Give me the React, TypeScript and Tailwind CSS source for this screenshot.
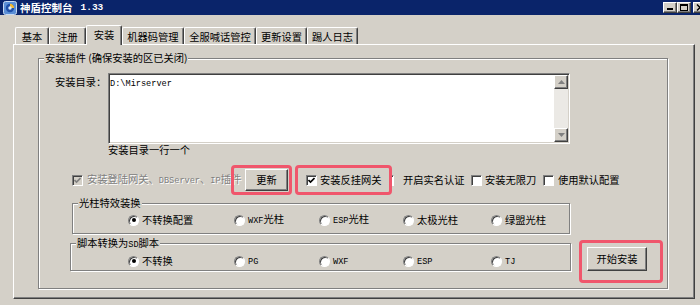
import React from "react";

/** Latin runs use a mono serif face, like the old SimSun ASCII glyphs */
function M({ children }: { children: React.ReactNode }) {
  return <span className="font-['Liberation_Mono',monospace] text-[8.6px]">{children}</span>;
}

function CheckBox({ checked = false, disabled = false }: { checked?: boolean; disabled?: boolean }) {
  return (
    <span
      className={`flex h-[11px] w-[11px] shrink-0 items-center justify-center border border-t-[#808080] border-l-[#808080] border-r-white border-b-white shadow-[inset_1px_1px_0_#404040] ${
        disabled ? "bg-[#d4d0c8]" : "bg-white"
      }`}
    >
      {checked && (
        <svg width="7" height="7" viewBox="0 0 7 7">
          <path d="M0.5 3 L2.5 5 L6.5 1" fill="none" stroke={disabled ? "#808080" : "#000"} strokeWidth="1.6" />
        </svg>
      )}
    </span>
  );
}

function Radio({ checked = false }: { checked?: boolean }) {
  return (
    <span className="flex h-[11px] w-[11px] shrink-0 items-center justify-center rounded-full border border-t-[#808080] border-l-[#808080] border-r-white border-b-white bg-white shadow-[inset_1px_1px_0_#404040]">
      {checked && <span className="h-[4px] w-[4px] rounded-full bg-black" />}
    </span>
  );
}

function RadioItem({ label, checked, className = "" }: { label: React.ReactNode; checked?: boolean; className?: string }) {
  return (
    <div className={`flex items-center gap-[3px] ${className}`}>
      <Radio checked={checked} />
      <span>{label}</span>
    </div>
  );
}

const raised =
  "border border-t-white border-l-white border-r-[#404040] border-b-[#404040] shadow-[inset_-1px_-1px_0_#808080] bg-[#d4d0c8]";
const etched = "border border-[#808080] shadow-[inset_1px_1px_0_#fff,1px_1px_0_#fff]";

function AppIcon() {
  return (
    <svg width="14" height="14" viewBox="0 0 14 14">
      <rect x="0.5" y="0.5" width="13" height="13" rx="2" fill="#5b8fd6" stroke="#c8daf2" />
      <circle cx="7" cy="7" r="4.2" fill="#1f4fa8" />
      <path d="M7 2.8 A4.2 4.2 0 0 1 11.2 7 L7 7Z" fill="#f3b830" />
      <circle cx="7" cy="7" r="1.7" fill="#d9ecff" />
    </svg>
  );
}

function Tab({ label, className, active = false }: { label: string; className: string; active?: boolean }) {
  if (active)
    return (
      <div
        className={`relative z-10 -mb-[1px] flex h-[20px] justify-center rounded-t-[2px] border-t border-l border-r border-t-white border-l-white border-r-[#404040] bg-[#d4d0c8] pt-[3px] shadow-[inset_-1px_0_0_#808080] ${className}`}
      >
        {label}
      </div>
    );
  return (
    <div
      className={`flex h-[17px] justify-center rounded-t-[2px] border-t border-l border-r border-t-white border-l-white border-r-[#404040] pt-[3px] shadow-[inset_-1px_0_0_#808080] ${className}`}
    >
      {label}
    </div>
  );
}

function GroupLabel({ children }: { children: React.ReactNode }) {
  return <span className="absolute left-[5px] top-[-7px] bg-[#d4d0c8] px-[1px] leading-[12px]">{children}</span>;
}

export default function App() {
  return (
    <div className="relative h-[305px] w-[700px] overflow-hidden bg-[#d4d0c8] font-['Noto_Sans_CJK_SC',sans-serif] text-[10.25px] leading-[12px] text-black">
      {/* Title bar */}
      <div className="flex h-[15px] items-center bg-[#0a246a] pl-[3px]">
        <AppIcon />
        <span className="ml-[3px] text-[10.5px] font-bold text-white">神盾控制台</span>
        <span className="ml-[8px] font-['Liberation_Mono',monospace] text-[9.5px] font-bold text-white">1.33</span>
        <div className="ml-auto mr-[-7px] flex">
          <div className={`flex h-[11px] w-[14px] items-end justify-center pb-[2px] ${raised}`}>
            <span className="h-[2px] w-[6px] bg-black" />
          </div>
          <div className={`flex h-[11px] w-[14px] items-center justify-center ${raised}`}>
            <span className="h-[7px] w-[8px] border border-t-2 border-black" />
          </div>
          <div className={`ml-[2px] flex h-[11px] w-[14px] items-center justify-center ${raised}`}>
            <svg width="8" height="7" viewBox="0 0 8 7">
              <path d="M1 0.5 L7 6.5 M7 0.5 L1 6.5" stroke="#000" strokeWidth="1.5" />
            </svg>
          </div>
        </div>
      </div>

      {/* Tabs */}
      <div className="mt-[10px] flex h-[19px] items-end pl-[15px]">
        <Tab label="基本" className="w-[34px]" />
        <Tab label="注册" className="w-[37px]" />
        <Tab label="安装" className="w-[36px]" active />
        <Tab label="机器码管理" className="w-[62px]" />
        <Tab label="全服喊话管控" className="w-[72px]" />
        <Tab label="更新设置" className="w-[51px]" />
        <Tab label="踢人日志" className="w-[51px]" />
      </div>

      {/* Tab page */}
      <div className="ml-[13px] h-[255px] w-[682px] border border-t-white border-l-white border-r-[#404040] border-b-[#404040] shadow-[inset_-1px_-1px_0_#808080]">
        <div className={`relative ml-[24px] mt-[13px] h-[231px] w-[630px] ${etched}`}>
          <GroupLabel>安装插件 (确保安装的区已关闭)</GroupLabel>

          {/* Install dir */}
          <div className="mt-[14px] flex">
            <div className="w-[69px] pl-[16px] pt-[3px]">安装目录：</div>
            <div className="flex h-[71px] w-[462px] border border-t-[#808080] border-l-[#808080] border-r-white border-b-white bg-white shadow-[inset_1px_1px_0_#404040,inset_-1px_-1px_0_#d4d0c8]">
              <div className="flex-1 pl-[1px] pt-[2px]">
                <M>D:\Mirserver</M>
              </div>
              <div className="mr-[1px] mt-[1px] mb-[1px] flex w-[14px] flex-col">
                <div className={`flex h-[14px] items-center justify-center ${raised}`}>
                  <svg width="7" height="4" viewBox="0 0 7 4">
                    <path d="M3.5 0 L7 4 L0 4Z" fill="#808080" />
                  </svg>
                </div>
                <div className="flex-1 bg-[#ebe9e5]" />
                <div className={`flex h-[14px] items-center justify-center ${raised}`}>
                  <svg width="7" height="4" viewBox="0 0 7 4">
                    <path d="M0 0 L7 0 L3.5 4Z" fill="#808080" />
                  </svg>
                </div>
              </div>
            </div>
          </div>
          <div className="pl-[69px]">安装目录一行一个</div>

          {/* Options row */}
          <div className="mt-[13px] flex h-[22px] items-center pl-[33px]">
            <CheckBox checked disabled />
            <span className="ml-[4px] w-[158px] whitespace-nowrap text-[#808080] [text-shadow:1px_1px_0_#fff]">
              安装登陆网关、<M>DBServer</M>、<M>IP</M>插件
            </span>
            <button className={`flex h-[22px] w-[43px] items-center justify-center ${raised}`}>更新</button>
            <span className="ml-[18px]">
              <CheckBox checked />
            </span>
            <span className="ml-[3px] w-[71px] whitespace-nowrap">安装反挂网关</span>
            {/* the next box sits mostly under the previous label */}
            <span className="h-[11px] w-[3px] shrink-0 border-t border-r border-t-[#808080] border-r-white bg-white shadow-[inset_0_1px_0_#404040]" />
            <span className="ml-[9px] w-[68px] whitespace-nowrap">开启实名认证</span>
            <CheckBox />
            <span className="ml-[3px] w-[58px] whitespace-nowrap">安装无限刀</span>
            <CheckBox />
            <span className="ml-[4px] whitespace-nowrap">使用默认配置</span>
          </div>

          {/* Converters + install button */}
          <div className="mt-[12px] flex items-start">
            <div className="ml-[31px] w-[501px]">
              <div className={`relative ml-[2px] h-[31px] w-[498px] ${etched}`}>
                <GroupLabel>光柱特效装换</GroupLabel>
                <div className="flex pl-[55px] pt-[9px]">
                  <RadioItem label="不转换配置" checked className="w-[106px]" />
                  <RadioItem label={<><M>WXF</M>光柱</>} className="w-[85px]" />
                  <RadioItem label={<><M>ESP</M>光柱</>} className="w-[84px]" />
                  <RadioItem label="太极光柱" className="w-[88px]" />
                  <RadioItem label="绿盟光柱" />
                </div>
              </div>
              <div className={`relative mt-[9px] h-[28px] w-[501px] ${etched}`}>
                <GroupLabel>
                  脚本转换为<M>SD</M>脚本
                </GroupLabel>
                <div className="flex pl-[57px] pt-[10px]">
                  <RadioItem label="不转换" checked className="w-[106px]" />
                  <RadioItem label={<M>PG</M>} className="w-[85px]" />
                  <RadioItem label={<M>WXF</M>} className="w-[84px]" />
                  <RadioItem label={<M>ESP</M>} className="w-[88px]" />
                  <RadioItem label={<M>TJ</M>} />
                </div>
              </div>
            </div>
            <button className={`ml-[16px] mt-[44px] flex h-[24px] w-[60px] items-center justify-center ${raised}`}>
              开始安装
            </button>
          </div>
        </div>
      </div>

      {/* Annotation highlights */}
      <div className="absolute left-[231px] top-[165px] h-[30px] w-[61px] rounded-[4px] border-[3px] border-[#f0566c]" />
      <div className="absolute left-[295px] top-[165px] h-[30px] w-[97px] rounded-[4px] border-[3px] border-[#f0566c]" />
      <div className="absolute left-[579px] top-[240px] h-[43px] w-[84px] rounded-[4px] border-[3px] border-[#f0566c]" />
    </div>
  );
}
